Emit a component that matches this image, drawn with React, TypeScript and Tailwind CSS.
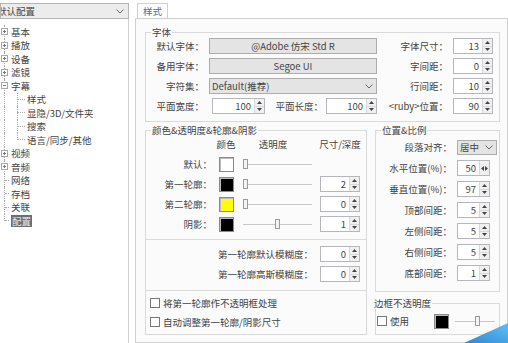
import React from "react";

const Arrows = ({ horiz = false }: { horiz?: boolean }) =>
  horiz ? (
    <div className="w-[10px] flex items-center justify-center gap-[1px] bg-[#f0f0f0] border-l border-[#d9d9d9]">
      <svg width="3" height="5" viewBox="0 0 3 5"><path d="M3 0 L0 2.5 L3 5Z" fill="#444" /></svg>
      <svg width="3" height="5" viewBox="0 0 3 5"><path d="M0 0 L3 2.5 L0 5Z" fill="#444" /></svg>
    </div>
  ) : (
    <div className="w-[10px] flex flex-col bg-[#f0f0f0] border-l border-[#d9d9d9]">
      <div className="flex-1 flex items-center justify-center border-b border-[#d9d9d9]">
        <svg width="5" height="3" viewBox="0 0 5 3"><path d="M0 3 L2.5 0 L5 3Z" fill="#444" /></svg>
      </div>
      <div className="flex-1 flex items-center justify-center">
        <svg width="5" height="3" viewBox="0 0 5 3"><path d="M0 0 L2.5 3 L5 0Z" fill="#444" /></svg>
      </div>
    </div>
  );

const Spin = ({ v, w, horiz }: { v: string; w: string; horiz?: boolean }) => (
  <div className={`flex h-[16px] border border-[#b5b7bd] bg-white ${w}`}>
    <div className="flex-1 text-right pr-[3px] leading-[14px]">{v}</div>
    <Arrows horiz={horiz} />
  </div>
);

const Swatch = ({ c }: { c: string }) => (
  <div className={`w-[15px] h-[15px] border border-[#8a8a8a] shadow-[inset_1px_1px_0_#bbb] ${c}`} />
);

const Slider = ({ pos, w }: { pos: string; w: string }) => (
  <div className={`relative h-[16px] flex items-center ${w}`}>
    <div className="w-full h-[1px] bg-[#c8c8c8]" />
    <div className={`absolute top-[3px] w-[5px] h-[10px] border border-[#9a9a9a] bg-[#f4f4f4] ${pos}`} />
  </div>
);

const Check = ({ t }: { t: string }) => (
  <div className="flex items-center gap-[3px] h-[16px] whitespace-nowrap">
    <div className="w-[10px] h-[10px] border border-[#777] bg-white" />
    <span>{t}</span>
  </div>
);

const Chevron = () => (
  <svg width="8" height="5" viewBox="0 0 8 5"><path d="M0.5 0.5 L4 4 L7.5 0.5" stroke="#666" strokeWidth="1" fill="none" /></svg>
);

const Lbl = ({ t, w }: { t: string; w: string }) => (
  <div className={`text-right whitespace-nowrap ${w}`}>{t}</div>
);

const tree: { t: string; lvl: number; box?: "+" | "-"; sel?: boolean; last?: boolean }[] = [
  { t: "基本", lvl: 0, box: "+" },
  { t: "播放", lvl: 0, box: "+" },
  { t: "设备", lvl: 0, box: "+" },
  { t: "滤镜", lvl: 0, box: "+" },
  { t: "字幕", lvl: 0, box: "-" },
  { t: "样式", lvl: 1 },
  { t: "显隐/3D/文件夹", lvl: 1 },
  { t: "搜索", lvl: 1 },
  { t: "语言/同步/其他", lvl: 1, last: true },
  { t: "视频", lvl: 0, box: "+" },
  { t: "音频", lvl: 0, box: "+" },
  { t: "网络", lvl: 0 },
  { t: "存档", lvl: 0 },
  { t: "关联", lvl: 0 },
  { t: "配置", lvl: 0, sel: true, last: true },
];

export default function App() {
  return (
    <div className="w-[508px] h-[343px] bg-white relative overflow-hidden flex font-['Noto_Sans_CJK_SC',sans-serif] text-[9.5px] text-[#444]">
      {/* left */}
      <div className="w-[129px] flex flex-col">
        <div className="mt-[3px] h-[16px] border border-[#b5b5b5] bg-[#ececec] flex items-center justify-between pr-[4px] overflow-hidden">
          <span className="leading-[14px] -ml-[4px] whitespace-nowrap">默认配置</span>
          <Chevron />
        </div>
        <div className="flex-1 border-r border-[#cfcfcf] pt-[6px] bg-white">
          {tree.map((it, i) => (
            <div key={i} className="h-[13.5px] flex items-center">
              <div className="relative w-[9px] self-stretch flex items-center">
                <div className={`absolute left-[4px] top-0 border-l border-dotted border-[#aaa] ${it.last && it.lvl === 0 ? "h-1/2" : "h-full"}`} />
                {it.lvl === 0 && !it.box && <div className="absolute left-[5px] w-[4px] border-t border-dotted border-[#aaa]" />}
                {it.lvl === 0 && it.box && (
                  <div className="relative ml-[1px] w-[7px] h-[7px] border border-[#a8a8a8] bg-white flex items-center justify-center">
                    <div className="w-[3px] h-[1px] bg-[#777] relative">
                      {it.box === "+" && <div className="absolute left-[1px] -top-[1px] w-[1px] h-[3px] bg-[#777]" />}
                    </div>
                  </div>
                )}
              </div>
              {it.lvl === 1 ? (
                <>
                  <div className="relative ml-[8px] w-[8px] self-stretch flex items-center">
                    <div className={`absolute left-0 top-0 border-l border-dotted border-[#aaa] ${it.last ? "h-1/2" : "h-full"}`} />
                    <div className="w-full border-t border-dotted border-[#aaa]" />
                  </div>
                  <span className="ml-[2px] leading-[12px] whitespace-nowrap">{it.t}</span>
                </>
              ) : (
                <span className={`ml-[2px] leading-[12px] whitespace-nowrap ${it.sel ? "bg-[#6e6e6e] text-[#e8e8e8] px-[1px]" : ""}`}>{it.t}</span>
              )}
            </div>
          ))}
        </div>
      </div>

      {/* right */}
      <div className="flex-1 flex flex-col pl-[6px]">
        <div className="h-[18px] flex items-end pl-[2px]">
          <div className="h-[15px] w-[31px] border border-b-0 border-[#d0d0d0] bg-white flex items-center justify-center text-[#3f6f9e] leading-[13px]">样式</div>
        </div>
        <div className="flex-1 border border-[#d0d0d0] bg-[#fbfbfb] pl-[9px] pr-[7px]">
          {/* 字体 */}
          <fieldset className="mt-[7px] border border-[#dadada] pb-[7px]">
            <legend className="ml-[5px] px-[1px] leading-[12px]">字体</legend>
            <div className="flex">
              <div className="w-[232px] flex flex-col gap-[4px]">
                <div className="flex items-center gap-[5px] h-[16px]">
                  <Lbl t="默认字体：" w="w-[58px]" />
                  <div className="w-[168px] h-[16px] border border-[#adadad] bg-[#e4e4e4] text-center leading-[14px]">@Adobe 仿宋 Std R</div>
                </div>
                <div className="flex items-center gap-[5px] h-[16px]">
                  <Lbl t="备用字体：" w="w-[58px]" />
                  <div className="w-[168px] h-[16px] border border-[#adadad] bg-[#e4e4e4] text-center leading-[14px]">Segoe UI</div>
                </div>
                <div className="flex items-center gap-[5px] h-[16px]">
                  <Lbl t="字符集：" w="w-[58px]" />
                  <div className="w-[168px] h-[16px] border border-[#adadad] bg-[#e4e4e4] flex items-center justify-between pl-[2px] pr-[3px]">
                    <span className="leading-[14px]">Default(推荐)</span>
                    <Chevron />
                  </div>
                </div>
                <div className="flex items-center h-[16px]">
                  <Lbl t="平面宽度：" w="w-[58px]" />
                  <div className="ml-[8px]"><Spin v="100" w="w-[53px]" /></div>
                  <Lbl t="平面长度：" w="w-[58px]" />
                  <div className="ml-[3px]"><Spin v="100" w="w-[51px]" /></div>
                </div>
              </div>
              <div className="flex-1 flex flex-col gap-[4px]">
                {[
                  ["字体尺寸：", "13"],
                  ["字间距：", "0"],
                  ["行间距：", "10"],
                  ["<ruby>位置：", "90"],
                ].map(([l, v]) => (
                  <div key={l} className="flex items-center h-[16px] gap-[5px]">
                    <Lbl t={l} w="w-[70px]" />
                    <Spin v={v} w="w-[40px]" />
                  </div>
                ))}
              </div>
            </div>
          </fieldset>

          <div className="flex gap-[8px] mt-[2px]">
            {/* 颜色 */}
            <fieldset className="w-[222px] border border-[#dadada] pb-[4px]">
              <legend className="ml-[5px] px-[1px] leading-[12px]">颜色&amp;透明度&amp;轮廓&amp;阴影</legend>
              <div className="flex flex-col gap-[4px]">
                <div className="flex items-center h-[16px] whitespace-nowrap">
                  <div className="w-[66px]" />
                  <div className="w-[28px] flex justify-center">颜色</div>
                  <div className="w-[66px] flex justify-center">透明度</div>
                  <div className="ml-[14px] w-[40px] flex justify-center">尺寸/深度</div>
                </div>
                {[
                  ["默认：", "bg-white", "left-[0px]", ""],
                  ["第一轮廓：", "bg-black", "left-[0px]", "2"],
                  ["第二轮廓：", "bg-[#ffff00]", "left-[0px]", "0"],
                  ["阴影：", "bg-black", "left-[32px]", "1"],
                ].map(([l, c, p, v]) => (
                  <div key={l} className="flex items-center h-[16px]">
                    <Lbl t={l} w="w-[66px]" />
                    <div className="ml-[7px]"><Swatch c={c} /></div>
                    <div className="ml-[9px]"><Slider pos={p} w="w-[69px]" /></div>
                    {v && <div className="ml-[8px]"><Spin v={v} w="w-[40px]" /></div>}
                  </div>
                ))}
              </div>
              <div className="mt-[7px] border-t border-[#dadada]" />
              <div className="flex flex-col gap-[4px] mt-[6px]">
                {["第一轮廓默认模糊度：", "第一轮廓高斯模糊度："].map((l) => (
                  <div key={l} className="flex items-center h-[16px]">
                    <Lbl t={l} w="w-[167px]" />
                    <div className="ml-[7px]"><Spin v="0" w="w-[40px]" /></div>
                  </div>
                ))}
              </div>
              <div className="mt-[8px] border-t border-[#dadada]" />
              <div className="flex flex-col gap-[3px] mt-[4px] pl-[4px]">
                <Check t="将第一轮廓作不透明框处理" />
                <Check t="自动调整第一轮廓/阴影尺寸" />
              </div>
            </fieldset>

            <div className="flex-1 flex flex-col gap-[3px]">
              {/* 位置 */}
              <fieldset className="border border-[#dadada] pb-[10px]">
                <legend className="ml-[5px] px-[1px] leading-[12px]">位置&amp;比例</legend>
                <div className="flex flex-col gap-[5px] mt-[3px]">
                  <div className="flex items-center h-[16px] gap-[5px]">
                    <Lbl t="段落对齐：" w="w-[76px]" />
                    <div className="w-[40px] h-[15px] border border-[#adadad] bg-[#e4e4e4] flex items-center justify-between pl-[2px] pr-[3px]">
                      <span className="leading-[13px]">居中</span>
                      <Chevron />
                    </div>
                  </div>
                  {[
                    ["水平位置(%)：", "50", true],
                    ["垂直位置(%)：", "97", false],
                    ["顶部间距：", "5", false],
                    ["左侧间距：", "5", false],
                    ["右侧间距：", "5", false],
                    ["底部间距：", "1", false],
                  ].map(([l, v, h]) => (
                    <div key={l as string} className="flex items-center h-[16px] gap-[5px]">
                      <Lbl t={l as string} w="w-[76px]" />
                      <Spin v={v as string} w="w-[33px]" horiz={h as boolean} />
                    </div>
                  ))}
                </div>
              </fieldset>
              {/* 边框不透明度 */}
              <fieldset className="border border-[#dadada] pb-[5px] mt-[2px]">
                <legend className="-ml-[3px] px-[1px] leading-[12px] whitespace-nowrap">边框不透明度</legend>
                <div className="flex items-center h-[16px] mt-[4px] pl-[1px]">
                  <Check t="使用" />
                  <div className="ml-[25px]"><Swatch c="bg-black" /></div>
                  <div className="ml-[6px]"><Slider pos="left-[20px]" w="w-[40px]" /></div>
                </div>
              </fieldset>
            </div>
          </div>
        </div>
      </div>

      {/* decorative corner */}
      <svg className="absolute right-0 bottom-0" width="48" height="22" viewBox="0 0 48 22">
        <defs>
          <linearGradient id="g" x1="0" y1="1" x2="1" y2="0">
            <stop offset="0" stopColor="#2f86d6" />
            <stop offset="1" stopColor="#5fc0f2" />
          </linearGradient>
        </defs>
        <path d="M4 22 L48 2 L48 22Z" fill="url(#g)" />
      </svg>
    </div>
  );
}
